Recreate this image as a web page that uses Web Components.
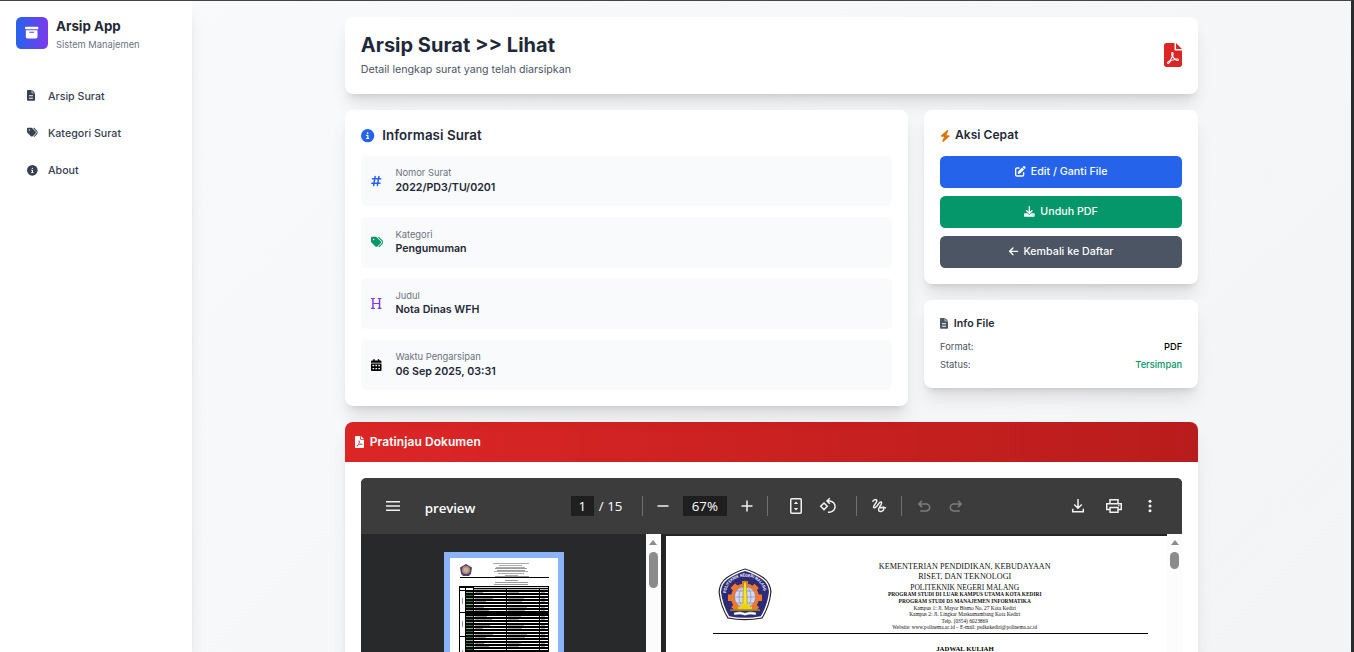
<!DOCTYPE html>
<html lang="id">
<head>
<meta charset="utf-8">
<title>Arsip Surat - Lihat</title>
<style>
html,body{margin:0;height:100%;overflow:hidden}
body{font-family:Inter,"Liberation Sans",sans-serif;color:#1f2937;background:#2b2b2b;
--shadow:0 13.333px 16.667px -3.333px rgba(0,0,0,.1),0 5.333px 6.667px -4px rgba(0,0,0,.1)}
</style>
</head>
<body>
<arsip-app></arsip-app>
<script>
const define=(name,html,setup)=>{
  const t=document.createElement('template');t.innerHTML=html;
  customElements.define(name,class extends HTMLElement{
    constructor(){super();this.attachShadow({mode:'open'}).append(t.content.cloneNode(true));}
    connectedCallback(){if(setup&&!this.ready){this.ready=true;setup(this,this.shadowRoot);}}
  });
};

/* solid icons: [view box width, path] on a 512 tall grid */
const ICONS={
file:[384,'M256 0v128h128L256 0zM224 128V0H48C21.500 0 0 21.500 0 48v416c0 26.500 21.500 48 48 48h288c26.500 0 48-21.500 48-48V160H256c-17.700 0-32-14.300-32-32zM272 416H112c-8.800 0-16-7.200-16-16s7.200-16 16-16h160c8.800 0 16 7.200 16 16s-7.200 16-16 16zm0-64H112c-8.800 0-16-7.200-16-16s7.200-16 16-16h160c8.800 0 16 7.200 16 16s-7.200 16-16 16zm16-80c0 8.800-7.200 16-16 16H112c-8.800 0-16-7.200-16-16s7.200-16 16-16h160c8.800 0 16 7.200 16 16z'],
tags:[512,'M345 39.100L472.800 168.400c52.400 53 52.400 138.200 0 191.200L360.800 472.900c-9.300 9.400-24.500 9.500-33.900 .2s-9.500-24.500-.2-33.900L438.600 325.900c33.900-34.300 33.900-89.400 0-123.700L310.900 72.900c-9.300-9.400-9.200-24.600 .2-33.900s24.600-9.200 33.900 .2zM0 229.500V80C0 53.500 21.500 32 48 32H197.500c17 0 33.300 6.700 45.300 18.700l168 168c25 25 25 65.500 0 90.500L277.300 442.700c-25 25-65.500 25-90.500 0l-168-168C6.700 262.700 0 246.500 0 229.500zM144 144a32 32 0 1 0 -64 0 32 32 0 1 0 64 0z'],
info:[512,'M256 512A256 256 0 1 0 256 0a256 256 0 1 0 0 512zM216 336h24V272H216c-13.300 0-24-10.700-24-24s10.700-24 24-24h48c13.300 0 24 10.700 24 24v88h8c13.300 0 24 10.700 24 24s-10.700 24-24 24H216c-13.300 0-24-10.700-24-24s10.700-24 24-24zm40-208a32 32 0 1 1 0 64 32 32 0 1 1 0-64z'],
archive:[512,'M32 32H480c17.700 0 32 14.300 32 32V96c0 17.700-14.300 32-32 32H32C14.300 128 0 113.700 0 96V64C0 46.300 14.300 32 32 32zm0 128H480V416c0 35.300-28.700 64-64 64H96c-35.300 0-64-28.700-64-64V160zm128 80c0 8.800 7.200 16 16 16H336c8.800 0 16-7.200 16-16s-7.200-16-16-16H176c-8.800 0-16 7.200-16 16z'],
hash:[448,'M181.300 32.400c17.400 2.900 29.200 19.400 26.300 36.800L197.800 128h95.100l11.500-69.300c2.900-17.400 19.400-29.200 36.800-26.300s29.200 19.400 26.300 36.800L357.800 128H416c17.700 0 32 14.300 32 32s-14.300 32-32 32H347.100L325.800 320H384c17.700 0 32 14.300 32 32s-14.300 32-32 32H315.100l-11.500 69.300c-2.900 17.400-19.400 29.200-36.800 26.300s-29.200-19.400-26.300-36.800l9.800-58.700H155.100l-11.500 69.300c-2.900 17.400-19.400 29.200-36.800 26.300s-29.200-19.400-26.300-36.800L90.200 384H32c-17.700 0-32-14.300-32-32s14.300-32 32-32h68.900l21.300-128H64c-17.700 0-32-14.300-32-32s14.300-32 32-32h68.900l11.500-69.300c2.900-17.400 19.400-29.200 36.800-26.300zM187.100 192L165.800 320h95.100l21.300-128H187.100z'],
heading:[448,'M0 0H164V46H114V210H334V46H284V0H448V46H396V420H448V466H284V420H334V256H114V420H164V466H0V420H52V46H0z'],
calendar:[448,'M96 32V64H48C21.500 64 0 85.500 0 112v48H448V112c0-26.500-21.500-48-48-48H352V32c0-17.700-14.300-32-32-32s-32 14.300-32 32V64H160V32c0-17.700-14.300-32-32-32S96 14.300 96 32zM448 192H0V464c0 26.500 21.500 48 48 48H400c26.500 0 48-21.500 48-48zM64 250h72v62H64zM188 250h72v62H188zM312 250h72v62H312zM64 380h72v62H64zM188 380h72v62H188zM312 380h72v62H312z'],
bolt:[448,'M349.400 44.600c5.900-13.700 1.500-29.700-10.600-38.500s-28.600-8-39.900 1.800l-256 224c-10 8.800-13.600 22.900-8.900 35.300S50.700 288 64 288H175.500L98.600 467.400c-5.900 13.700-1.500 29.700 10.600 38.500s28.600 8 39.900-1.800l256-224c10-8.800 13.600-22.900 8.900-35.300s-16.600-20.700-30-20.700H272.500L349.400 44.600z'],
edit:[512,'M471.600 21.700c-21.900-21.900-57.300-21.900-79.200 0L362.300 51.700l97.900 97.900 30.100-30.100c21.900-21.900 21.900-57.300 0-79.200L471.600 21.700zm-299.200 220c-6.100 6.100-10.800 13.600-13.500 21.900l-29.600 88.800c-2.900 8.600-.6 18.100 5.800 24.600s15.900 8.700 24.600 5.800l88.800-29.600c8.200-2.700 15.700-7.400 21.900-13.500L437.700 172.300 339.700 74.300 172.400 241.700zM96 64C43 64 0 107 0 160V416c0 53 43 96 96 96H352c53 0 96-43 96-96V320c0-17.700-14.300-32-32-32s-32 14.300-32 32v96c0 17.700-14.300 32-32 32H96c-17.700 0-32-14.300-32-32V160c0-17.700 14.300-32 32-32h96c17.700 0 32-14.300 32-32s-14.300-32-32-32H96z'],
download:[512,'M288 32c0-17.700-14.300-32-32-32s-32 14.300-32 32V274.700l-73.400-73.400c-12.500-12.500-32.800-12.500-45.300 0s-12.500 32.800 0 45.300l128 128c12.500 12.500 32.800 12.500 45.300 0l128-128c12.500-12.500 12.500-32.800 0-45.300s-32.800-12.500-45.300 0L288 274.700V32zM480 352H346.500l-45.300 45.300C289.200 409.300 273.100 416 256 416s-33.200-6.700-45.300-18.700L165.500 352H32c-17.700 0-32 14.300-32 32v96c0 17.700 14.300 32 32 32h448c17.700 0 32-14.300 32-32v-96c0-17.700-14.300-32-32-32zM432 456a24 24 0 1 1 0-48 24 24 0 1 1 0 48z'],
left:[448,'M9.400 233.400c-12.500 12.500-12.500 32.800 0 45.300l160 160c12.500 12.500 32.800 12.500 45.300 0s12.500-32.800 0-45.300L109.200 288 416 288c17.700 0 32-14.300 32-32s-14.300-32-32-32l-306.700 0L214.600 118.600c12.500-12.500 12.500-32.800 0-45.300s-32.800-12.500-45.300 0l-160 160z'],
pdf:[384,'M181.900 256.100c-5-16-4.900-46.900-2-46.900 8.400 0 7.600 36.900 2 46.900zm-1.700 47.200c-7.700 20.200-17.300 43.300-28.400 62.700 18.300-7 39-17.200 62.900-21.900-12.700-9.600-24.900-23.400-34.500-40.800zM86.100 428.100c0 .8 13.200-5.400 34.900-40.200-6.700 6.300-29.100 24.500-34.900 40.200zM248 160h136v304c0 26-22 48-48 48H48c-26 0-48-22-48-48V48C0 22 22 0 48 0h176v136c0 13.200 10.800 24 24 24zm-8 171.800c-20-12.200-33.300-29-42.700-53.800 4.500-18.500 11.600-46.600 6.200-64.200-4.700-29.400-42.400-26.500-47.800-6.800-5 18.300-.4 44.100 8.100 77-11.600 27.600-28.700 64.600-40.800 85.800-.1 0-.1.1-.2.1-27.100 13.900-73.600 44.500-54.500 68 5.600 6.900 16 10 21.500 10 17.900 0 35.700-18 61.100-61.800 25.800-8.500 54.100-19.100 79-23.200 21.700 11.800 47.100 19.500 64 19.500 29.200 0 31.200-32 19.700-43.400-13.900-13.600-54.300-9.700-73.600-7.200zM384 128L256 0v128h128zm-81.100 232.300c4.100-2.700-2.500-11.900-42.800-9 37.100 15.800 42.800 9 42.800 9z']
};
define('fa-icon','<style>:host{display:inline-flex;flex:none}svg{height:1em;display:block;fill:currentColor;fill-rule:evenodd;overflow:visible}</style><svg><path/></svg>',(el,root)=>{
  const icon=ICONS[el.getAttribute('name')];
  if(!icon)return;
  const s=root.querySelector('svg');
  s.setAttribute('viewBox',`0 0 ${icon[0]} 512`);s.style.width=icon[0]/512+'em';
  s.firstChild.setAttribute('d',icon[1]);
});

/* PDF viewer toolbar glyphs on a 20px grid */
const S='fill="none" stroke="currentColor" stroke-width="1.500"';
const TOOLS={
menu:'<path fill="currentColor" d="M3 5h14v1.500H3zM3 9.250h14v1.500H3zM3 13.500h14v1.500H3z"/>',
minus:'<path fill="currentColor" d="M4.500 9.300h11v1.500h-11z"/>',
plus:'<path fill="currentColor" d="M4.500 9.300h4.750V4.500h1.500v4.800h4.750v1.500h-4.750v4.700h-1.500v-4.700H4.500z"/>',
fit:`<rect x="4.750" y="2.750" width="10.500" height="14.500" rx="1" ${S}/><path fill="currentColor" d="M10 5.500l2.200 2.600H7.800zM10 14.500l2.200-2.600H7.800z"/>`,
rotate:`<path d="M6 7L9.300 10.300 6 13.600 2.700 10.300z" ${S}/><path d="M9 5h2.200a5.600 5.600 0 1 1-1.200 11M11.800 2.200L9 5l2.800 2.700" ${S}/>`,
draw:`<path d="M3.500 5.800C4.300 3.600 7.600 2.600 7.800 4.900 8 7 3.700 9.300 4.700 11.300c1.200 1.900 3.800-1.800 5.200-4 1.500-2.400 3.500-1.300 2.300 1-1.400 2.500-3.300 4.500-2.400 6.300.9 1.700 4.800.9 5-1.600.1-1.700-2.200-2-4-.9M13.500 11c1.700.1 2.700.5 3.500 1.300" ${S}/>`,
undo:`<path d="M8 4.700L4.800 7.900 8 11.100M5 7.900h7.200a3.500 3.500 0 0 1 0 7H6.200" ${S}/>`,
redo:`<path d="M12 4.700l3.200 3.200-3.200 3.200M15 7.900H7.800a3.500 3.500 0 0 0 0 7h6" ${S}/>`,
save:`<path d="M10 3v9M6.200 8.500L10 12.200l3.800-3.700M4.700 12.800v2.900h10.600v-2.900" ${S}/>`,
print:`<path d="M6 7V3.750h8V7M5.500 13.500H2.750V7.750h14.500v5.750H14.500M6 11.500h8v4.750H6z" ${S}/><circle cx="14.700" cy="9.800" r=".8" fill="currentColor"/>`,
more:'<g fill="currentColor"><circle cx="10" cy="5.200" r="1.500"/><circle cx="10" cy="10" r="1.500"/><circle cx="10" cy="14.800" r="1.500"/></g>'
};
define('tool-icon','<style>:host{display:block;flex:none;width:20px;height:20px;color:#f1f1f1}:host([off]){color:#7c7c7c}svg{display:block}</style><svg width="20" height="20" viewBox="0 0 20 20"></svg>',(el,root)=>{
  root.querySelector('svg').innerHTML=TOOLS[el.getAttribute('name')];
});

define('nav-item',`<style>:host{display:flex;align-items:center;height:32px;padding:0 10.667px;font-size:10.667px;line-height:16px;font-weight:500;color:#374151}
.i{width:13.333px;margin-right:8px;display:flex;margin-bottom:2px}.t{padding-top:1px}</style><span class="i"></span><span class="t"><slot></slot></span>`,(el,r)=>{
  const n=document.createElement('fa-icon');n.setAttribute('name',el.getAttribute('icon'));r.querySelector('.i').append(n);
});
define('side-bar',`<style>:host{display:block;width:192px;flex:none;background:#fff;box-shadow:var(--shadow);box-sizing:border-box;padding:16px 16px 0}
.brand{display:flex;align-items:flex-start;height:32px;margin-bottom:31.200px}
.logo{width:32px;height:32px;border-radius:5.333px;background:linear-gradient(90deg,#2563eb,#7c3aed);color:#fff;display:flex;justify-content:center;align-items:center;font-size:13.333px;margin-right:8px}
.logo fa-icon{margin-bottom:1px}
b{display:block;font-size:13.333px;line-height:18.667px;font-weight:700}
small{display:block;font-size:9.333px;line-height:13.333px;color:#6b7280;margin-top:2px}
nav{display:grid;gap:5.333px}</style>
<div class="brand"><div class="logo"><fa-icon name="archive"></fa-icon></div><div><b>Arsip App</b><small>Sistem Manajemen</small></div></div>
<nav><nav-item icon="file">Arsip Surat</nav-item><nav-item icon="tags">Kategori Surat</nav-item><nav-item icon="info">About</nav-item></nav>`);

define('ui-card',`<style>:host{display:block;box-sizing:border-box;background:#fff;border-radius:8px;padding:16px;box-shadow:var(--shadow)}</style><slot></slot>`);

define('page-header',`<style>:host{display:block}ui-card{height:77.333px}
.row{display:flex;justify-content:space-between;align-items:center;height:100%}
h1{margin:0 0 5.333px;font-size:20px;line-height:24px;font-weight:700}
p{margin:0;font-size:10.667px;line-height:16px;color:#4b5563}
fa-icon{font-size:24px;color:#dc2626;margin-bottom:1.500px}</style>
<ui-card><div class="row"><div><h1>Arsip Surat &gt;&gt; Lihat</h1><p>Detail lengkap surat yang telah diarsipkan</p></div><fa-icon name="pdf"></fa-icon></div></ui-card>`);

define('info-row',`<style>:host{display:flex;align-items:center;box-sizing:border-box;height:50.667px;padding:0 10.667px;background:#f9fafb;border-radius:5.333px}
.i{width:13.333px;margin-right:10.667px;font-size:12px;display:flex}
.l{font-size:9.333px;line-height:13.333px;color:#6b7280}.v{font-size:10.667px;line-height:16px;font-weight:600}</style>
<span class="i"><slot name="icon"></slot></span><div><div class="l"><slot name="label"></slot></div><div class="v"><slot></slot></div></div>`);

define('letter-info',`<style>:host{display:block}h2{margin:0 0 10.667px;font-size:13.333px;line-height:18.667px;font-weight:600;letter-spacing:.08px;display:flex;align-items:center}
h2 fa-icon{color:#2563eb;margin-right:8px}.list{display:grid;gap:10.667px}</style>
<ui-card><h2><fa-icon name="info"></fa-icon>Informasi Surat</h2><div class="list">
<info-row><fa-icon slot="icon" name="hash" style="color:#2563eb"></fa-icon><span slot="label">Nomor Surat</span>2022/PD3/TU/0201</info-row>
<info-row><fa-icon slot="icon" name="tags" style="color:#059669"></fa-icon><span slot="label">Kategori</span>Pengumuman</info-row>
<info-row><fa-icon slot="icon" name="heading" style="color:#7c3aed"></fa-icon><span slot="label">Judul</span>Nota Dinas WFH</info-row>
<info-row><fa-icon slot="icon" name="calendar" style="color:#000"></fa-icon><span slot="label">Waktu Pengarsipan</span>06 Sep 2025, 03:31</info-row>
</div></ui-card>`);

define('action-button',`<style>:host{display:flex;justify-content:center;align-items:center;height:32px;border-radius:5.333px;color:#fff;font-size:10.667px;line-height:16px;font-weight:500;letter-spacing:.02px;gap:5.333px;box-sizing:border-box}
::slotted(fa-icon){margin-bottom:1.500px}</style><slot></slot>`);
define('quick-actions',`<style>:host{display:block}h3{margin:0 0 10.667px;font-size:12px;line-height:18.667px;font-weight:600;letter-spacing:.04px;display:flex;align-items:center}
h3 fa-icon{color:#d97706;margin-right:4.500px}.list{display:grid;gap:8px}</style>
<ui-card><h3><fa-icon name="bolt"></fa-icon>Aksi Cepat</h3><div class="list">
<action-button style="background:#2563eb"><fa-icon name="edit"></fa-icon><span>Edit / Ganti File</span></action-button>
<action-button style="background:#059669"><fa-icon name="download"></fa-icon><span>Unduh PDF</span></action-button>
<action-button style="background:#4b5563"><fa-icon name="left"></fa-icon><span>Kembali ke Daftar</span></action-button></div></ui-card>`);
define('file-info',`<style>:host{display:block}h4{margin:0 0 8px;font-size:10.667px;line-height:16px;font-weight:600;display:flex;align-items:center}
h4 fa-icon{color:#4b5563;margin-right:5.800px}.r{display:flex;justify-content:space-between;font-size:9.333px;line-height:13.333px;color:#4b5563}.r+.r{margin-top:5.333px}.r b{font-weight:500;color:#000}.r b.g{color:#059669}</style>
<ui-card><h4><fa-icon name="file"></fa-icon>Info File</h4><div class="r"><span>Format:</span><b>PDF</b></div><div class="r"><span>Status:</span><b class="g">Tersimpan</b></div></ui-card>`);

define('scroll-bar',`<style>:host{display:flex;flex-direction:column;align-items:center;flex:none;width:15px;background:#fcfcfc;box-sizing:border-box;padding-top:6px}
i{width:0;height:0;border:solid transparent;border-width:0 4.500px 5px;border-bottom-color:#8b8b8b}
b{width:9px;border-radius:5px;background:#8b8b8b;margin-top:7px}</style><i></i><b></b>`,(el,r)=>{r.querySelector('b').style.height=el.getAttribute('thumb')+'px';});

define('campus-seal',`<style>:host{display:block;flex:none;width:54px;height:53px}svg{display:block;width:100%;height:100%}text{font:bold 4.200px "Liberation Sans",sans-serif;fill:#fff}</style>
<svg viewBox="0 0 54 53"><path d="M27 .5Q36 3 46 9.500 53 15 53.500 24 52 38 44.500 50.500 27 54 9.500 50.500 2 38 .5 24 1 15 8 9.500 18 3 27 .5z" fill="#222"/><path d="M27 1.600Q36 4 45 10.300 51.800 15 52.300 24 51 38 43.700 49.500 27 52.700 10.300 49.500 3 38 1.700 24 2.200 15 9 10.300 18 4 27 1.600z" fill="#fff"/><path d="M27 3Q36 5.500 44.500 11.500 50.500 16 51 24 49.500 37 42.800 48.300 27 51.300 11.200 48.300 4.500 37 3 24 3.500 16 9.500 11.500 18 5.500 27 3z" fill="#2d2a78"/>
<g fill="#f0782a"><circle cx="27" cy="29.500" r="14"/><path d="M24 13h6v33h-6zM10 26.500h34v6.500H10z"/><path d="M24 13h6v33h-6zM10 26.500h34v6.500H10z" transform="rotate(45 27 29.500)"/></g>
<path d="M11 42.500h32v5H11z" fill="#2d2a78"/><circle cx="27" cy="29" r="10.500" fill="#d5d8ee"/><g fill="none" stroke="#7d82bd" stroke-width=".6"><circle cx="27" cy="29" r="10.500"/><ellipse cx="27" cy="29" rx="6" ry="10.500"/><path d="M16.500 29h21M18.500 23h17M18.500 35h17M27 18.500v21"/></g>
<path d="M25.500 16L27 12.500l1.500 3.500 .7 21h-4.400z" fill="#f6e51c" stroke="#7c6c10" stroke-width=".5"/><path d="M23 35.500h8v3h-8zM20 38.500h14v3H20z" fill="#e8d51a"/><path d="M12 41.300h30v1.600H12z" fill="#9b8a1c"/><path d="M16 44.500q6.500-1.500 11 .5 4.500-2 11-.5v2.600q-6.500-1.500-11 .5-4.500-2-11-.5z" fill="#fff" stroke="#555" stroke-width=".4"/>
<path id="arc" d="M8 26a19 17.500 0 0 1 38 0" fill="none"/><text><textPath href="#arc" textLength="53" lengthAdjust="spacingAndGlyphs" startOffset="1">POLITEKNIK NEGERI MALANG</textPath></text></svg>`);

define('page-thumb',`<style>:host{display:block;width:108px;height:150px;border:6px solid #8ab4f8;background:#fff}svg{display:block}</style><svg width="108" height="150" shape-rendering="crispEdges"></svg>`,(el,r)=>{
  const R=(x,y,w,h,f)=>`<rect x="${x}" y="${y}" width="${w}" height="${h}" fill="${f}"/>`;
  let s='<g shape-rendering="auto"><path d="M16 6l6 3.500-1 6-2 2.500h-6l-2-2.500-1-6z" fill="#45427a"/><circle cx="16" cy="12" r="4" fill="#c98a60"/><circle cx="16" cy="12" r="2.300" fill="#b9b4a8"/></g>';
  [[43,36,5],[49,23,7],[46,29,9],[45,32,10],[47,28,12],[44,34,13],[48,26,15],[55,13,17],[45,34,18],[55,13,22],[45,33,24],[44,34,26]].forEach(([x,w,y])=>{s+=R(x,y,w,1,y%2?'#aaa':'#999');});
  s+=R(10,19,89,1,'#000')+R(9,28,90,122,'#000')+R(10,30,5,2,'#fff')+R(16,30,7,2,'#fff')+R(24,29,74,1,'#ddd')+R(24,31,32,1,'#aaa')+R(57,31,32,1,'#bbb')+R(90,31,8,1,'#bbb');
  [[33,21],[55,23],[79,80]].forEach(([y,h])=>{s+=R(10,y,5,h,'#fff')+R(12,Math.min(y+h/2-3,92)|0,1,6,'#999');});
  for(let y=34,n=0;y<150;y+=3,n++){
    if(n===7)continue;
    s+=R(24,y,32,1,'#fff')+R(57,y,32,1,'#fff')+R(90,y,8,1,'#fff')+R(16,y,7,1,n%2?'#12703a':'#999');
    if(n%3!==1)s+=R(25,y,8+n*5%12,1,'#999')+R(58,y,11+n*7%9,1,'#aaa')+R(91,y,4,1,'#aaa');
  }
  r.querySelector('svg').innerHTML=s;
});

define('pdf-toolbar',`<style>:host{display:flex;align-items:center;height:56px;box-sizing:border-box;padding:0 22px;background:#3c3c3c;color:#fff;font:13.300px "Open Sans","Noto Sans",sans-serif}
.t{width:146px;margin-left:22px;font-weight:600;font-size:13.300px;letter-spacing:-.1px;padding-top:3px}
.b{background:#1f1f1f;height:20px;line-height:21px;text-align:center}
.n{margin-left:5px;width:38px;white-space:nowrap}
hr{margin:0;border:0;width:1px;height:20px;background:#6f6f6f}</style>
<tool-icon name="menu"></tool-icon><div class="t">preview</div><div class="b" style="width:23px">1</div><div class="n">/ 15</div>
<hr style="margin-left:5px"><tool-icon name="minus" style="margin-left:10px"></tool-icon><div class="b" style="width:44px;margin:0 10px">67%</div><tool-icon name="plus"></tool-icon>
<hr style="margin-left:10px"><tool-icon name="fit" style="margin-left:18px"></tool-icon><tool-icon name="rotate" style="margin-left:12px"></tool-icon>
<hr style="margin-left:18px"><tool-icon name="draw" style="margin-left:12px"></tool-icon><hr style="margin:0 12px"><tool-icon name="undo" off></tool-icon><tool-icon name="redo" off style="margin-left:12px"></tool-icon>
<tool-icon name="save" style="margin-left:auto"></tool-icon><tool-icon name="print" style="margin-left:16px"></tool-icon><tool-icon name="more" style="margin-left:16px"></tool-icon>`);

define('letter-page',`<style>:host{display:block;background:#fff;flex:1;box-sizing:border-box;padding:25px 19px 0 47px;font-family:"Liberation Serif",serif;color:#000;text-align:center}
.h{display:flex;align-items:flex-start;height:72px;border-bottom:1px solid #000;box-sizing:content-box}
campus-seal{margin:6.500px 0 0 5px}
.x{flex:1;display:flex;flex-direction:column;align-items:center;padding-left:9.500px}
.x div{white-space:nowrap;color:#111}
.a{font-size:8.200px;height:10.200px;line-height:11px}.a.l{font-size:7.520px;height:9px}.m{font-size:5.400px;height:7px;line-height:7px;font-weight:700}.s{font-size:5.330px;height:6.600px;line-height:6.600px}.s.w{font-size:5.230px}
.k{font-weight:700;font-size:6.800px;line-height:9px;margin-top:10px;padding-left:69px}</style>
<div class="h"><campus-seal></campus-seal><div class="x">
<div class="a">KEMENTERIAN PENDIDIKAN, KEBUDAYAAN</div><div class="a">RISET, DAN TEKNOLOGI</div><div class="a l">POLITEKNIK NEGERI MALANG</div>
<div class="m">PROGRAM STUDI DI LUAR KAMPUS UTAMA KOTA KEDIRI</div><div class="m">PROGRAM STUDI D3 MANAJEMEN INFORMATIKA</div>
<div class="s">Kampus 1: Jl. Mayor Bismo No. 27 Kota Kediri</div><div class="s">Kampus 2: Jl. Lingkar Maskumambang Kota Kediri</div><div class="s">Telp. (0354) 6023869</div><div class="s w">Website: www.polinema.ac.id – E-mail: psdkukediri@polinema.ac.id</div></div></div>
<div class="k">JADWAL KULIAH</div>`);

define('doc-preview',`<style>:host{display:block}ui-card{padding:0;overflow:hidden}
h2{margin:0;height:40px;box-sizing:border-box;padding:0 10.667px 1px;display:flex;align-items:center;font-size:12px;font-weight:600;letter-spacing:.07px;color:#fff;background:linear-gradient(90deg,#dc2626,#b91c1c)}
h2 fa-icon{margin-right:5.333px}.body{padding:16px}
.v{border-radius:5.333px;overflow:hidden;height:400px;background:#28292a}
.c{display:flex;height:344px}.side{width:285px;display:flex;justify-content:center;padding-top:18px;box-sizing:border-box}
.p{flex:1;display:flex;padding:2px 0 0 5px;background:#242424}</style>
<ui-card><h2><fa-icon name="pdf"></fa-icon>Pratinjau Dokumen</h2><div class="body"><div class="v"><pdf-toolbar></pdf-toolbar>
<div class="c"><div class="side"><page-thumb style="margin-right:-1px"></page-thumb></div><scroll-bar thumb="36"></scroll-bar><div class="p"><letter-page></letter-page></div><scroll-bar thumb="17"></scroll-bar></div></div></div></ui-card>`);

define('arsip-app',`<style>:host{display:flex;height:652px;box-sizing:border-box;border-top:1px solid #444;border-right:3px solid #2b2b2b;overflow:hidden;background:linear-gradient(135deg,#f9fafb,#f3f4f6)}
side-bar{position:relative;z-index:1}
main{flex:1;display:flex;justify-content:center;padding-top:16px;align-items:flex-start}
.w{width:853.333px}.g{display:grid;grid-template-columns:563.200px 1fr;gap:16px;margin:16px 0}.col{display:grid;gap:16px;align-content:start}</style>
<side-bar></side-bar><main><div class="w"><page-header></page-header><div class="g"><letter-info></letter-info><div class="col"><quick-actions></quick-actions><file-info></file-info></div></div><doc-preview></doc-preview></div></main>`);
</script>
</body>
</html>
